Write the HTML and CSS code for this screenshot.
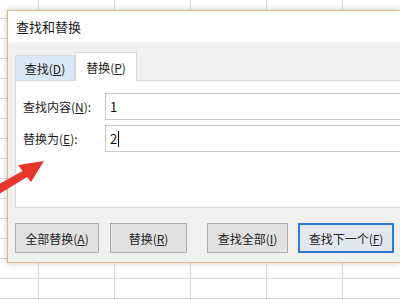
FILE: index.html
```html
<!DOCTYPE html>
<html>
<head>
<meta charset="utf-8">
<link rel="stylesheet" href="styles.css">
</head>
<body>
<div class="sheet"></div>
<div class="dialog">
  <div class="titlebar">查找和替换</div>
  <div class="body">
    <div class="tabs">
      <div class="tab">查找(<u>D</u>)</div>
      <div class="tab active">替换(<u>P</u>)</div>
    </div>
    <div class="panel">
      <div class="row">
        <span class="label">查找内容(<u>N</u>):</span>
        <div class="input">1</div>
      </div>
      <div class="row">
        <span class="label">替换为(<u>E</u>):</span>
        <div class="input">2<span class="caret"></span></div>
      </div>
    </div>
    <div class="buttons">
      <div class="btn b1">全部替换(<u>A</u>)</div>
      <div class="btn b2">替换(<u>R</u>)</div>
      <div class="btn b3">查找全部(<u>I</u>)</div>
      <div class="btn b4 default">查找下一个(<u>F</u>)</div>
    </div>
  </div>
</div>
<svg class="arrow" width="60" height="60" viewBox="0 150 60 60">
  <polygon points="44,161 31,182 27,177 0,193.5 0,183.5 22.5,171 18,165" fill="#e8362d"/>
</svg>
</body>
</html>
```
FILE: styles.css
```css
html, body {
  margin: 0;
  padding: 0;
  width: 400px;
  height: 300px;
  overflow: hidden;
  background: #fff;
  font-family: "Noto Sans CJK SC", "Noto Sans", sans-serif;
  font-size: 12px;
  color: #222;
}
.sheet {
  width: 400px;
  height: 300px;
  background-image:
    linear-gradient(to right, #dcdcdc 1px, transparent 1px),
    linear-gradient(to bottom, #dcdcdc 1px, transparent 1px);
  background-size: 76px 100%, 100% 20px;
  background-position: 38px 0, 0 18px;
}
.dialog {
  position: absolute;
  left: 7px;
  top: 10px;
  width: 392px;
  height: 251px;
  border: 1px solid #dcb78c;
  border-right: none;
  background: #f0f0f0;
  box-shadow: 0 0 6px rgba(0,0,0,0.22);
  display: flex;
  flex-direction: column;
  overflow: hidden;
}
.titlebar {
  height: 31px;
  background: #fff;
  padding-left: 8px;
  display: flex;
  align-items: center;
  font-size: 13px;
  color: #1a1a1a;
}
.body {
  flex: 1;
  padding: 10px 0 0 7px;
  display: flex;
  flex-direction: column;
  min-width: 0;
}
u { text-decoration: underline; text-underline-offset: 1px; }
.tabs {
  display: flex;
  align-items: flex-end;
  height: 28px;
}
.tab {
  height: 25px;
  width: 60px;
  display: flex;
  align-items: center;
  justify-content: center;
  background: #d9e8f6;
  border: 1px solid #d4dde6;
  border-bottom: none;
  box-sizing: border-box;
  color: #222;
}
.tab.active {
  height: 29px;
  width: 62px;
  background: #fff;
  border: 1px solid #d9d9d9;
  border-bottom: none;
  margin-bottom: -1px;
  position: relative;
  z-index: 1;
}
.panel {
  height: 128px;
  box-sizing: border-box;
  background: #fff;
  border: 1px solid #d9d9d9;
  border-right: none;
  padding: 12px 0 0 7px;
  display: flex;
  flex-direction: column;
  gap: 5px;
}
.row {
  display: flex;
  align-items: center;
  height: 27px;
}
.label {
  width: 82px;
  color: #222;
}
.input {
  flex: 1;
  height: 27px;
  box-sizing: border-box;
  border: 1px solid #c6c6c6;
  border-right: none;
  padding-left: 4px;
  display: flex;
  align-items: center;
  font-size: 13px;
  color: #111;
}
.caret {
  display: inline-block;
  width: 1px;
  height: 16px;
  background: #000;
  margin-left: 1px;
}
.buttons {
  display: flex;
  margin-top: 15px;
  height: 30px;
}
.btn {
  height: 30px;
  box-sizing: border-box;
  border: 1px solid #adadad;
  background: #e1e1e1;
  display: flex;
  align-items: center;
  justify-content: center;
  color: #222;
  flex-shrink: 0;
}
.b1 { width: 84px; }
.b2 { width: 77px; margin-left: 11px; }
.b3 { width: 81px; margin-left: 20px; }
.b4 { width: 96px; margin-left: 10px; }
.btn.default {
  border: 2px solid #2a7ad2;
  background: #e3e8ee;
}
.arrow {
  position: absolute;
  left: 0;
  top: 150px;
}
```
